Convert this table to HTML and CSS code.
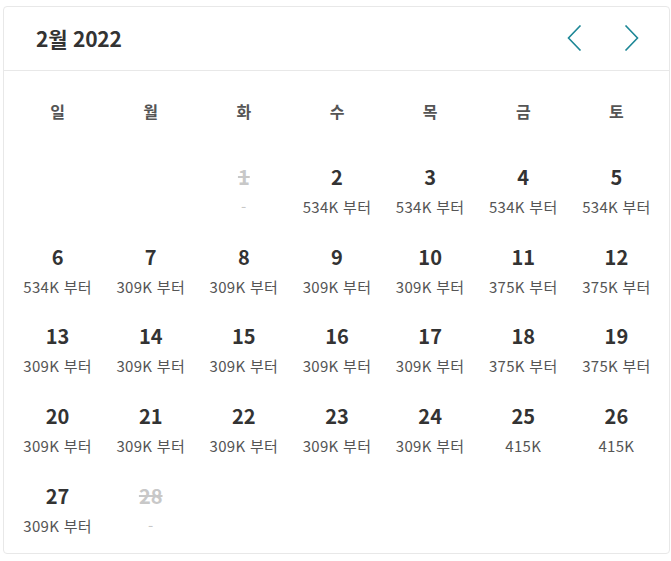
FILE: index.html
```html
<!DOCTYPE html>
<html lang="ko">
<head>
<meta charset="utf-8">
<link rel="stylesheet" href="styles.css">
</head>
<body>
<div class="card">
  <div class="header">
    <div class="title">2월 2022</div>
    <div class="nav">
      <button class="nav-btn" aria-label="이전 달">
        <svg width="15" height="26" viewBox="0 0 15 26"><polyline points="13.5,0.5 1.5,13 13.5,25.5" fill="none" stroke="#1d8796" stroke-width="1.6"/></svg>
      </button>
      <button class="nav-btn" aria-label="다음 달">
        <svg width="15" height="26" viewBox="0 0 15 26"><polyline points="1.5,0.5 13.5,13 1.5,25.5" fill="none" stroke="#1d8796" stroke-width="1.6"/></svg>
      </button>
    </div>
  </div>
  <div class="grid">
    <div class="wd">일</div><div class="wd">월</div><div class="wd">화</div><div class="wd">수</div><div class="wd">목</div><div class="wd">금</div><div class="wd">토</div>

    <div class="day empty"></div>
    <div class="day empty"></div>
    <div class="day off"><div class="num">1</div><div class="price">-</div></div>
    <div class="day"><div class="num">2</div><div class="price">534K 부터</div></div>
    <div class="day"><div class="num">3</div><div class="price">534K 부터</div></div>
    <div class="day"><div class="num">4</div><div class="price">534K 부터</div></div>
    <div class="day"><div class="num">5</div><div class="price">534K 부터</div></div>

    <div class="day"><div class="num">6</div><div class="price">534K 부터</div></div>
    <div class="day"><div class="num">7</div><div class="price">309K 부터</div></div>
    <div class="day"><div class="num">8</div><div class="price">309K 부터</div></div>
    <div class="day"><div class="num">9</div><div class="price">309K 부터</div></div>
    <div class="day"><div class="num">10</div><div class="price">309K 부터</div></div>
    <div class="day"><div class="num">11</div><div class="price">375K 부터</div></div>
    <div class="day"><div class="num">12</div><div class="price">375K 부터</div></div>

    <div class="day"><div class="num">13</div><div class="price">309K 부터</div></div>
    <div class="day"><div class="num">14</div><div class="price">309K 부터</div></div>
    <div class="day"><div class="num">15</div><div class="price">309K 부터</div></div>
    <div class="day"><div class="num">16</div><div class="price">309K 부터</div></div>
    <div class="day"><div class="num">17</div><div class="price">309K 부터</div></div>
    <div class="day"><div class="num">18</div><div class="price">375K 부터</div></div>
    <div class="day"><div class="num">19</div><div class="price">375K 부터</div></div>

    <div class="day"><div class="num">20</div><div class="price">309K 부터</div></div>
    <div class="day"><div class="num">21</div><div class="price">309K 부터</div></div>
    <div class="day"><div class="num">22</div><div class="price">309K 부터</div></div>
    <div class="day"><div class="num">23</div><div class="price">309K 부터</div></div>
    <div class="day"><div class="num">24</div><div class="price">309K 부터</div></div>
    <div class="day"><div class="num">25</div><div class="price">415K</div></div>
    <div class="day"><div class="num">26</div><div class="price">415K</div></div>

    <div class="day"><div class="num">27</div><div class="price">309K 부터</div></div>
    <div class="day off"><div class="num">28</div><div class="price">-</div></div>
  </div>
</div>
</body>
</html>
```
FILE: styles.css
```css
html, body {
  margin: 0;
  padding: 0;
  background: #fff;
}
body {
  font-family: "Noto Sans CJK KR", "Noto Sans", sans-serif;
  color: #333;
}
.card {
  box-sizing: border-box;
  margin: 6px 0 0 3px;
  width: 667px;
  height: 548px;
  border: 1px solid #e8e8e8;
  border-radius: 4px;
}
.header {
  box-sizing: border-box;
  height: 64px;
  border-bottom: 1px solid #e8e8e8;
  display: flex;
  align-items: center;
  justify-content: space-between;
  padding: 0 30px 2px 32px;
}
.title {
  font-size: 21px;
  font-weight: 700;
  color: #333;
  letter-spacing: -0.2px;
}
.nav {
  display: flex;
  gap: 42px;
}
.nav-btn {
  border: 0;
  background: none;
  padding: 0;
  margin: 0;
  width: 15px;
  height: 26px;
  display: flex;
}
.grid {
  display: grid;
  grid-template-columns: repeat(7, 1fr);
  grid-template-rows: 80px;
  grid-auto-rows: 79.7px;
  padding: 0 6px 0 7px;
}
.wd {
  display: flex;
  align-items: center;
  justify-content: center;
  font-size: 16px;
  font-weight: 700;
  color: #555;
}
.day {
  display: flex;
  flex-direction: column;
  align-items: center;
  padding-top: 12px;
}
.num {
  font-size: 20px;
  font-weight: 700;
  line-height: 28px;
  color: #333;
}
.price {
  margin-top: 6px;
  font-size: 15px;
  line-height: 20px;
  letter-spacing: 0.3px;
  color: #555;
}
.off .num {
  color: #c8c8c8;
  text-decoration: line-through;
  text-decoration-thickness: 2px;
}
.off .price {
  color: #c8c8c8;
}
```
